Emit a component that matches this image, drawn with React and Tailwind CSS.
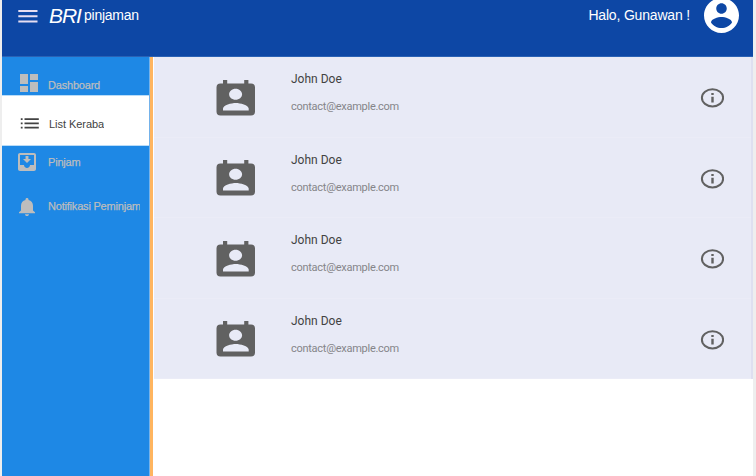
import React from "react";

const DashboardIcon = () => (
  <svg className="block h-[18px] w-[18px]" viewBox="0 0 18 18" fill="currentColor">
    <path d="M0 0h8v10H0zM10 0h8v6h-8zM0 12h8v6H0zM10 8h8v10h-8z" />
  </svg>
);

const ListIcon = () => (
  <svg className="block h-[12px] w-[19px]" viewBox="0 0 19 12" fill="currentColor">
    <path d="M.8.3h1.800v1.700H.8zM.8 4.500h1.800v1.700H.8zM.8 8.700h1.800v1.700H.8zM4.500.3h14.300v1.700H4.500zM4.500 4.500h14.300v1.700H4.500zM4.500 8.700h14.300v1.700H4.500z" />
  </svg>
);

const InboxIcon = () => (
  <svg className="block h-[18px] w-[18px]" viewBox="3 3 18 18" fill="currentColor">
    <path d="M16 9h-2.55V6h-2.9v3H8l4 4zm3-6H4.99C3.88 3 3 3.900 3 5v14c0 1.100.88 2 1.990 2H19c1.100 0 2-.9 2-2V5c0-1.100-.9-2-2-2zm0 12h-4c0 1.660-1.350 3-3 3s-3-1.340-3-3H4.990V5H19v10z" />
  </svg>
);

const BellIcon = () => (
  <svg className="block h-[18px] w-[16px]" viewBox="4 2.5 16 19.5" preserveAspectRatio="none" fill="currentColor">
    <path d="M12 22c1.100 0 2-.9 2-2h-4c0 1.100.89 2 2 2zm6-6v-5c0-3.070-1.640-5.640-4.500-6.320V4c0-.83-.67-1.500-1.500-1.500s-1.500.67-1.500 1.500v.68C7.630 5.360 6 7.920 6 11v5l-2 2v1h16v-1l-2-2z" />
  </svg>
);

const ContactIcon = () => (
  <svg className="block h-[38px] w-[40px]" viewBox="0 0 40 38" fill="#616161">
    <path
      fillRule="evenodd"
      d="M7 0h4.200v3.600h17V0h4.200v3.600H35a4 4 0 0 1 4 4v24a4 4 0 0 1-4 4H4.500a4 4 0 0 1-4-4v-24a4 4 0 0 1 4-4H7zM19.600 8.800c-3.600 0-6.500 2.500-6.500 5.500s2.900 5.500 6.500 5.500 6.500-2.500 6.500-5.500-2.900-5.500-6.500-5.500zM7 30.600h25.700v-2c0-3.600-8.600-5.700-12.900-5.700S7 25 7 28.600z"
    />
  </svg>
);

const InfoIcon = () => (
  <svg className="block h-[20px] w-[24px]" viewBox="0 0 24 20">
    <ellipse cx="12.500" cy="9.800" rx="10.600" ry="8.600" fill="none" stroke="#616161" strokeWidth="2" />
    <path d="M11.300 5h2.400v1.900h-2.400zM11.300 8.800h2.400v5.600h-2.400z" fill="#616161" />
  </svg>
);

const AvatarIcon = () => (
  <svg className="block h-[35px] w-[35px]" viewBox="2 2 20 20" fill="#fff">
    <path d="M12 2C6.480 2 2 6.480 2 12s4.480 10 10 10 10-4.480 10-10S17.520 2 12 2zm0 3c1.660 0 3 1.340 3 3s-1.340 3-3 3-3-1.340-3-3 1.340-3 3-3zm0 14.200c-2.500 0-4.710-1.280-6-3.220.03-1.990 4-3.080 6-3.080 1.990 0 5.970 1.090 6 3.080-1.290 1.940-3.500 3.220-6 3.220z" />
  </svg>
);

const contacts = [
  { name: "John Doe", email: "contact@example.com" },
  { name: "John Doe", email: "contact@example.com" },
  { name: "John Doe", email: "contact@example.com" },
  { name: "John Doe", email: "contact@example.com" },
];

function Header() {
  return (
    <header className="flex h-[57px] shrink-0 items-start border-b border-[#2a62b5] bg-[#0d47a5] text-white">
      <svg className="mt-[9px] ml-[16px] h-[15px] w-[20px] shrink-0" viewBox="0 0 20 15" fill="#e6def2">
        <path d="M.3 1h19.200v2H.3zM.3 6.300h19.200v2H.3zM.3 11.600h19.200v2H.3z" />
      </svg>
      <span className="ml-[11px] w-[35px] text-[21px] leading-[31px] tracking-[-1.1px] italic">BRI</span>
      <span className="text-[14px] leading-[31px] tracking-[-0.25px]">pinjaman</span>
      <span className="ml-auto text-[14px] leading-[30px] tracking-[-0.18px]">Halo, Gunawan !</span>
      <div className="-mt-[2px] mr-[14px] ml-[14px]">
        <AvatarIcon />
      </div>
    </header>
  );
}

function Sidebar() {
  return (
    <nav className="w-[147px] shrink-0 bg-[#1e88e5] text-[11px] leading-[14px] tracking-[-0.2px] text-[#bdbdbd]">
      <div className="flex h-[38px] items-start pt-[17px] pl-[18px]">
        <DashboardIcon />
        <span className="mt-[4px] ml-[10px] [-webkit-text-stroke:0.25px_#bdbdbd]">Dashboard</span>
      </div>
      <div className="flex h-[51px] items-start border-y border-[#b9dcf8] bg-white pt-[22px] pl-[18px] text-[#424242]">
        <ListIcon />
        <span className="-mt-px ml-[10px] w-[55px] overflow-hidden tracking-[-0.05px] whitespace-nowrap">List Kerabat</span>
      </div>
      <div className="flex h-[45px] items-start pt-[7px] pl-[16px]">
        <InboxIcon />
        <span className="mt-[2px] ml-[12px] [-webkit-text-stroke:0.25px_#bdbdbd]">Pinjam</span>
      </div>
      <div className="flex items-start pt-[7px] pl-[17px]">
        <BellIcon />
        <span className="mt-[1px] ml-[13px] w-[92px] overflow-hidden whitespace-nowrap [-webkit-text-stroke:0.25px_#bdbdbd]">
          Notifikasi Peminjam
        </span>
      </div>
    </nav>
  );
}

function ContactRow({ name, email }) {
  return (
    <li className="flex h-[80.5px] items-start border-b border-[#ebecf7] pl-[62px] font-['Roboto',sans-serif]">
      <div className="mt-[22.9px]">
        <ContactIcon />
      </div>
      <div className="mt-[14px] ml-[35px]">
        <p className="text-[12px] leading-[16px] text-[#424242]">{name}</p>
        <p className="mt-[13px] text-[11px] leading-[14px] tracking-[-0.27px] text-[#858589]">{email}</p>
      </div>
      <div className="mt-[31px] mr-[27px] ml-auto">
        <InfoIcon />
      </div>
    </li>
  );
}

export default function App() {
  return (
    <div className="flex h-[476px] w-[756px] overflow-hidden bg-[#eeeeee] pr-[3px] pl-[2px] font-['Liberation_Sans',Arial,sans-serif]">
      <div className="flex min-w-0 flex-1 flex-col bg-white">
        <Header />
        <div className="flex min-h-0 flex-1">
          <Sidebar />
          <div className="w-[4px] shrink-0 border-l border-[#74b2ea] bg-[#ffb55f]" />
          <main className="ml-px min-w-0 flex-1">
            <ul className="border-r-2 border-[#dedff0] bg-[#e8eaf6]">
              {contacts.map((contact, index) => (
                <ContactRow key={index} {...contact} />
              ))}
            </ul>
          </main>
        </div>
      </div>
    </div>
  );
}
